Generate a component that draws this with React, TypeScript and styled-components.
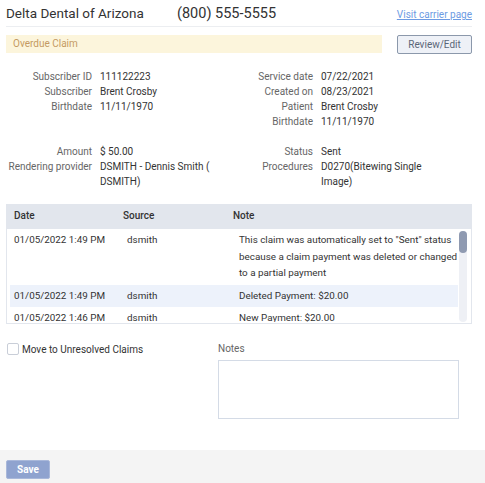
import React from 'react';
import styled, { createGlobalStyle } from 'styled-components';

const GlobalStyle = createGlobalStyle`
  html, body {
    margin: 0;
    padding: 0;
    background: #ffffff;
    font-family: Roboto, 'Noto Sans', Arial, sans-serif;
    color: #333;
  }
  * {
    box-sizing: border-box;
  }
`;

const Page = styled.div`
  width: 485px;
  height: 483px;
  display: flex;
  flex-direction: column;
  overflow: hidden;
`;

const Content = styled.div`
  flex: 1;
  padding: 0 13px 0 6px;
`;

const Header = styled.div`
  display: flex;
  align-items: baseline;
  height: 27px;
  padding-top: 5px;
  border-bottom: 1px solid #eceef1;
`;

const Title = styled.div`
  font-size: 13.5px;
  color: #333;
  width: 171px;
`;

const Phone = styled.div`
  font-size: 14.5px;
  color: #333;
`;

const CarrierLink = styled.a`
  margin-left: auto;
  font-size: 10px;
  color: #6d9be3;
  text-decoration: underline;
  cursor: pointer;
`;

const StatusRow = styled.div`
  display: flex;
  align-items: flex-start;
  margin-top: 8px;
`;

const Banner = styled.div`
  width: 376px;
  height: 18px;
  background: #fcf5dc;
  color: #c49a62;
  font-size: 10px;
  line-height: 18px;
  padding-left: 7px;
`;

const OutlineButton = styled.button`
  margin-left: auto;
  width: 75px;
  height: 19px;
  padding: 0;
  background: #eef1f7;
  border: 1px solid #8b98ab;
  border-radius: 2px;
  color: #5b6678;
  font-family: inherit;
  font-size: 10px;
`;

const Details = styled.div`
  display: grid;
  grid-template-columns: 86px 125px 80px 115px;
  column-gap: 8px;
  margin-top: 15px;
  font-size: 10px;
  line-height: 15px;
`;

const Label = styled.div`
  text-align: right;
  color: #666;
`;

const Value = styled.div`
  color: #333;
`;

const Spacer = styled.div`
  grid-column: 1 / -1;
  height: 15px;
`;

const Table = styled.div`
  margin-top: 15px;
  background: #e2e6ed;
  font-size: 10px;
`;

const HeadRow = styled.div`
  display: grid;
  grid-template-columns: 109px 110px 1fr;
  height: 23px;
  align-items: center;
  padding-left: 8px;
  font-weight: 500;
  color: #333;
`;

const Body = styled.div`
  display: flex;
  height: 97px;
  border: 1px solid #e2e6ed;
  border-top-width: 2px;
  background: #fff;
  padding: 0 4px 1px 3px;
`;

const Rows = styled.div`
  flex: 1;
  overflow: hidden;
  font-size: 9.85px;
`;

const Track = styled.div`
  width: 8px;
  margin: 2px 0 0 1px;
  background: #eef0f5;
  border-radius: 4px;
`;

const Thumb = styled.div`
  height: 22px;
  background: #8f9ab1;
  border-radius: 4px;
`;

const Row = styled.div<{ $highlight?: boolean }>`
  display: grid;
  grid-template-columns: 113px 112px 1fr;
  padding: 3px 0 3px 4px;
  line-height: 16.5px;
  background: ${({ $highlight }) => ($highlight ? '#edf2fb' : '#fff')};
  color: #333;
`;

const Bottom = styled.div`
  display: flex;
  margin-top: 17px;
`;

const CheckLabel = styled.label`
  display: flex;
  align-items: center;
  gap: 3px;
  width: 212px;
  height: 16px;
  font-size: 10px;
  color: #333;
`;

const Box = styled.span`
  display: inline-block;
  width: 12px;
  height: 12px;
  margin-left: 1px;
  border: 1px solid #c9ced8;
  border-radius: 2px;
  background: #fff;
`;

const NotesField = styled.div`
  display: flex;
  flex-direction: column;
  padding-top: 2px;
`;

const NotesLabel = styled.div`
  font-size: 10px;
  color: #666;
  margin-bottom: 6px;
`;

const NotesArea = styled.textarea`
  width: 241px;
  height: 59px;
  border: 1px solid #d4dbe6;
  resize: none;
  outline: none;
  font-family: inherit;
`;

const Footer = styled.div`
  height: 33px;
  background: #f4f4f4;
  padding: 8px 6px;
`;

const SaveButton = styled.button`
  width: 44px;
  height: 19px;
  padding: 0;
  border: 1px solid #a9b8da;
  border-radius: 2px;
  background: #8fa3cf;
  color: #fff;
  font-family: inherit;
  font-size: 10px;
  font-weight: 700;
`;

type HistoryItem = {
  date: string;
  source: string;
  note: string;
};

const history: HistoryItem[] = [
  {
    date: '01/05/2022 1:49 PM',
    source: 'dsmith',
    note: 'This claim was automatically set to "Sent" status because a claim payment was deleted or changed to a partial payment',
  },
  { date: '01/05/2022 1:49 PM', source: 'dsmith', note: 'Deleted Payment: $20.00' },
  { date: '01/05/2022 1:46 PM', source: 'dsmith', note: 'New Payment: $20.00' },
];

export default function App() {
  return (
    <>
      <GlobalStyle />
      <Page>
        <Content>
          <Header>
            <Title>Delta Dental of Arizona</Title>
            <Phone>(800) 555-5555</Phone>
            <CarrierLink>Visit carrier page</CarrierLink>
          </Header>

          <StatusRow>
            <Banner>Overdue Claim</Banner>
            <OutlineButton>Review/Edit</OutlineButton>
          </StatusRow>

          <Details>
            <Label>Subscriber ID</Label>
            <Value>111122223</Value>
            <Label>Service date</Label>
            <Value>07/22/2021</Value>

            <Label>Subscriber</Label>
            <Value>Brent Crosby</Value>
            <Label>Created on</Label>
            <Value>08/23/2021</Value>

            <Label>Birthdate</Label>
            <Value>11/11/1970</Value>
            <Label>Patient</Label>
            <Value>Brent Crosby</Value>

            <Label />
            <Value />
            <Label>Birthdate</Label>
            <Value>11/11/1970</Value>

            <Spacer />

            <Label>Amount</Label>
            <Value>$ 50.00</Value>
            <Label>Status</Label>
            <Value>Sent</Value>

            <Label>Rendering provider</Label>
            <Value>DSMITH - Dennis Smith ( DSMITH)</Value>
            <Label>Procedures</Label>
            <Value>D0270(Bitewing Single Image)</Value>
          </Details>

          <Table>
            <HeadRow>
              <span>Date</span>
              <span>Source</span>
              <span>Note</span>
            </HeadRow>
            <Body>
              <Rows>
                {history.map((h, i) => (
                  <Row key={i} $highlight={i === 1}>
                    <span>{h.date}</span>
                    <span>{h.source}</span>
                    <span>{h.note}</span>
                  </Row>
                ))}
              </Rows>
              <Track>
                <Thumb />
              </Track>
            </Body>
          </Table>

          <Bottom>
            <CheckLabel>
              <Box />
              Move to Unresolved Claims
            </CheckLabel>
            <NotesField>
              <NotesLabel>Notes</NotesLabel>
              <NotesArea />
            </NotesField>
          </Bottom>
        </Content>
        <Footer>
          <SaveButton>Save</SaveButton>
        </Footer>
      </Page>
    </>
  );
}
